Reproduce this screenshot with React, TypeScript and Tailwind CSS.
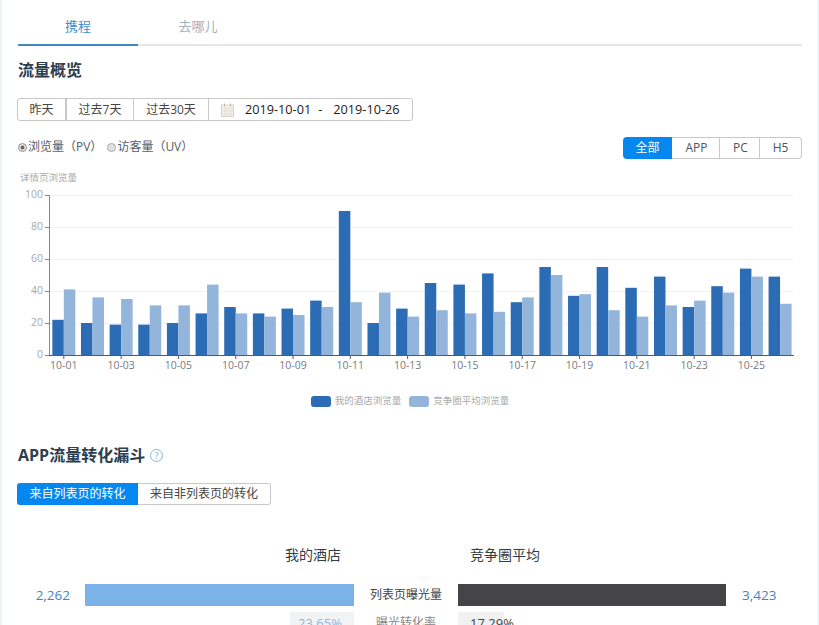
const mine = [22,20,19,19,20,26,30,26,29,34,90,20,29,45,44,51,33,55,37,55,42,49,30,43,54,49];
const comp = [41,36,35,31,31,44,26,24,25,30,33,39,24,28,26,27,36,50,38,28,24,31,34,39,49,32];
const X0 = 49.5, STEP = 28.65, Y0 = 355, SCALE = 1.6;

function Chart() {
  return (
    <svg width="819" height="215" viewBox="0 170 819 215" className="block -ml-[18px] text-[10.5px]" style={{ fontFamily: '"Open Sans","Noto Sans CJK SC",sans-serif' }}>
      <text x="20" y="180.5" fontSize="9.5" fill="#aaaaaa">详情页浏览量</text>
      {[20, 40, 60, 80, 100].map((v) => (
        <line key={v} x1={X0} x2="794" y1={Y0 - v * SCALE + 0.5} y2={Y0 - v * SCALE + 0.5} stroke="#f1f3f5" />
      ))}
      {[0, 20, 40, 60, 80, 100].map((v) => (
        <g key={v}>
          <line x1="45" x2={X0} y1={Y0 - v * SCALE + 0.5} y2={Y0 - v * SCALE + 0.5} stroke="#888888" />
          <text x="43" y={Y0 - v * SCALE + 3} textAnchor="end" fill="#a8a8a8">{v}</text>
        </g>
      ))}
      {mine.map((v, i) => {
        const c = X0 + STEP * i + STEP / 2;
        return (
          <g key={i}>
            <rect x={c - 11.5} y={Y0 - v * SCALE} width="11.5" height={v * SCALE} fill="#2b6cb5" />
            <rect x={c} y={Y0 - comp[i] * SCALE} width="11.5" height={comp[i] * SCALE} fill="#93b5dc" />
            {i % 2 === 0 && <line x1={c} x2={c} y1="355" y2="359" stroke="#555a60" />}
            {i % 2 === 0 && (
              <text x={c} y="369" textAnchor="middle" fill="#777b80">{`10-${String(i + 1).padStart(2, "0")}`}</text>
            )}
          </g>
        );
      })}
      <line x1="49.5" x2="49.5" y1="195" y2="355" stroke="#888888" />
      <line x1="49" x2="794" y1="355.5" y2="355.5" stroke="#555a60" />
    </svg>
  );
}

function Legend({ color, label }: { color: string; label: string }) {
  return (
    <span className="flex items-center gap-1">
      <span className="w-5 h-[11px] rounded-[3px]" style={{ backgroundColor: color }} />
      <span>{label}</span>
    </span>
  );
}

export default function App() {
  return (
    <div
      className="w-[819px] h-[625px] overflow-hidden bg-white border-x-2 border-[#eef3f8] pl-4 pr-[15px] text-[#333b45]"
      style={{ fontFamily: '"Open Sans","Noto Sans CJK SC",sans-serif' }}
    >
      <div className="flex h-[46px] border-b-2 border-[#e4e7ea] text-[13px]">
        <div className="w-[120px] h-[46px] pt-[14px] text-center text-[#3d8bd0] border-b-2 border-[#3f8ac2] leading-6">携程</div>
        <div className="w-[120px] pt-[14px] text-center text-[#9fb0bf] leading-6">去哪儿</div>
      </div>

      <h2 className="mt-[12px] h-[24px] text-[16px] font-bold leading-6 text-[#2c3e50]">流量概览</h2>

      <div className="mt-[16px] -ml-px flex w-[396px] h-[23px] items-center border border-[#c8c8c8] rounded-[3px] text-[12px] leading-none text-[#444]">
        <div className="w-[49px] h-full flex items-center justify-center border-r-2 border-[#c8c8c8]">昨天</div>
        <div className="w-[67px] h-full flex items-center justify-center border-r border-[#c8c8c8]">过去7天</div>
        <div className="w-[75px] h-full flex items-center justify-center border-r border-[#c8c8c8]">过去30天</div>
        <svg width="13" height="14" viewBox="0 0 13 14" className="ml-3" fill="none">
          <rect x="0.5" y="2" width="12" height="11.5" fill="#f6f4ee" stroke="#d5d2c8" />
          <path d="M1 5h11M1 8h11M1 11h11M4 5v8M7 5v8M10 5v8" stroke="#e2dfd6" />
          <path d="M3.5 0.5v3M9.5 0.5v3" stroke="#bdbab0" />
        </svg>
        <span className="ml-[11px] text-[12.7px] text-[#222]">2019-10-01</span>
        <span className="ml-[7px] text-[12.7px] text-[#222]">-</span>
        <span className="ml-[11px] text-[12.7px] text-[#222]">2019-10-26</span>
      </div>

      <div className="mt-4 h-[22px] flex items-start justify-between">
        <div className="flex items-center pt-[2px] gap-[5px] text-[12px] leading-4 text-[#555d66]">
          <span className="flex items-center">
            <span className="w-[9px] h-[9px] rounded-full border border-[#aaa] bg-[#666] shadow-[inset_0_0_0_1.5px_#e8e8e8]" />
            <span className="ml-px">浏览量（PV）</span>
          </span>
          <span className="flex items-center">
            <span className="w-[9px] h-[9px] rounded-full border border-[#aaa] bg-[#e0e0e0]" />
            <span className="ml-px">访客量（UV）</span>
          </span>
        </div>
        <div className="flex w-[179px] h-[22px] text-[12px] leading-none text-[#4a5560]">
          <div className="w-[49px] flex items-center justify-center rounded-l-[4px] bg-[#0587f0] text-white">全部</div>
          <div className="w-[48px] pl-[2px] flex items-center justify-center border-y border-r border-[#c8c8c8]">APP</div>
          <div className="w-[40px] pl-[2px] flex items-center justify-center border-y border-r border-[#c8c8c8]">PC</div>
          <div className="flex-1 flex items-center justify-center border-y border-r border-[#c8c8c8] rounded-r-[4px]">H5</div>
        </div>
      </div>

      <div className="mt-[11px]">
        <Chart />
      </div>

      <div className="mt-[8px] h-[16px] flex justify-center gap-2 text-[9.5px] leading-4 text-[#aaaaaa]">
        <Legend color="#2b6cb5" label="我的酒店浏览量" />
        <Legend color="#93b5dc" label="竞争圈平均浏览量" />
      </div>

      <div className="mt-[33px] h-[26px] flex items-center">
        <h2 className="text-[16px] font-bold leading-6 text-[#2c3e50]">APP流量转化漏斗</h2>
        <span className="ml-[5px] w-[13px] h-[13px] rounded-full border border-[#8ab8e2] text-[#6fa6d8] text-[9px] leading-[11px] text-center">?</span>
      </div>

      <div className="mt-[15px] -ml-px flex w-[254px] h-[22px] text-[12px] leading-none text-[#444]">
        <div className="w-[121px] flex items-center justify-center rounded-l-[3px] bg-[#0587f0] text-white">来自列表页的转化</div>
        <div className="flex-1 flex items-center justify-center border-y border-r border-[#c8c8c8] rounded-r-[3px]">来自非列表页的转化</div>
      </div>

      <div className="mt-[39px] h-[22px] flex text-[14px] leading-[22px] text-[#333b45]">
        <div className="w-[323px] text-right">我的酒店</div>
        <div className="ml-[129px]">竞争圈平均</div>
      </div>

      <div className="mt-[18px] h-[22px] flex items-center text-[13.5px]">
        <div className="w-[52px] text-right text-[#3d85c8]">2,262</div>
        <div className="ml-[15px] w-[269px] h-[22px] bg-[#7bb3e9]" />
        <div className="w-[104px] text-center text-[12px] text-[#444]">列表页曝光量</div>
        <div className="w-[268px] h-[22px] bg-[#454449]" />
        <div className="ml-[16px] text-[#3d85c8]">3,423</div>
      </div>

      <div className="mt-[6px] h-[22px] flex items-center text-[13px]">
        <div className="ml-[272px] w-[64px] h-[22px] bg-[#f1f3f5] pl-2 leading-[22px] text-[#8fb4dc]">23.65%</div>
        <div className="w-[104px] text-center text-[12px] leading-[22px] text-[#888]">曝光转化率</div>
        <div className="w-[46px] h-[22px] bg-[#f1f1f1] pl-3 leading-[22px] text-[#444] whitespace-nowrap">17.29%</div>
      </div>
    </div>
  );
}
